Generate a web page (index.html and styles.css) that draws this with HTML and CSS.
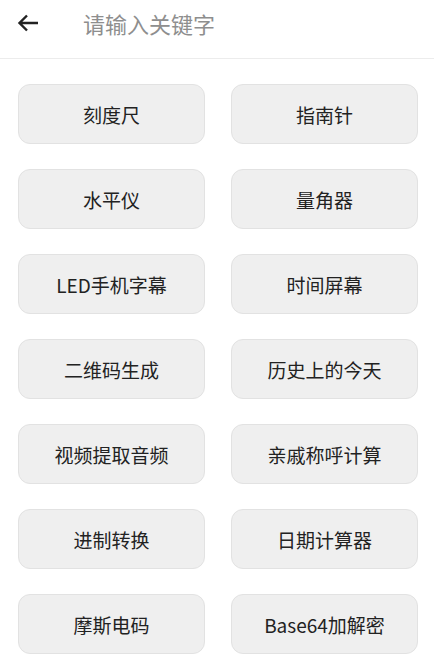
FILE: index.html
```html
<!DOCTYPE html>
<html lang="zh">
<head>
<meta charset="utf-8">
<link rel="stylesheet" href="styles.css">
</head>
<body>
<header class="topbar">
  <svg class="back" width="22" height="18" viewBox="0 0 22 18"><path d="M21 9H2.5M10 1.5L2.5 9L10 16.5" fill="none" stroke="#222" stroke-width="2.4" stroke-linecap="butt" stroke-linejoin="miter"/></svg>
  <span class="placeholder">请输入关键字</span>
</header>
<main class="grid">
  <div class="btn">刻度尺</div>
  <div class="btn">指南针</div>
  <div class="btn">水平仪</div>
  <div class="btn">量角器</div>
  <div class="btn">LED手机字幕</div>
  <div class="btn">时间屏幕</div>
  <div class="btn">二维码生成</div>
  <div class="btn">历史上的今天</div>
  <div class="btn">视频提取音频</div>
  <div class="btn">亲戚称呼计算</div>
  <div class="btn">进制转换</div>
  <div class="btn">日期计算器</div>
  <div class="btn">摩斯电码</div>
  <div class="btn">Base64加解密</div>
</main>
</body>
</html>
```
FILE: styles.css
```css
html, body {
  margin: 0;
  padding: 0;
  background: #fff;
  font-family: "Noto Sans CJK SC", sans-serif;
}
.topbar {
  height: 46px;
  padding-bottom: 12px;
  display: flex;
  align-items: center;
  padding-left: 17px;
  border-bottom: 1px solid #ececec;
}
.back {
  display: block;
}
.placeholder {
  margin-left: 44px;
  font-size: 22px;
  color: #8e8e8e;
}
.grid {
  display: grid;
  grid-template-columns: 187px 187px;
  column-gap: 26px;
  row-gap: 25px;
  padding: 25px 16px 0 18px;
}
.btn {
  height: 58px;
  border: 1px solid #e2e2e2;
  border-radius: 12px;
  background: #efefef;
  display: flex;
  align-items: center;
  justify-content: center;
  font-size: 19px;
  color: #222;
}
```
